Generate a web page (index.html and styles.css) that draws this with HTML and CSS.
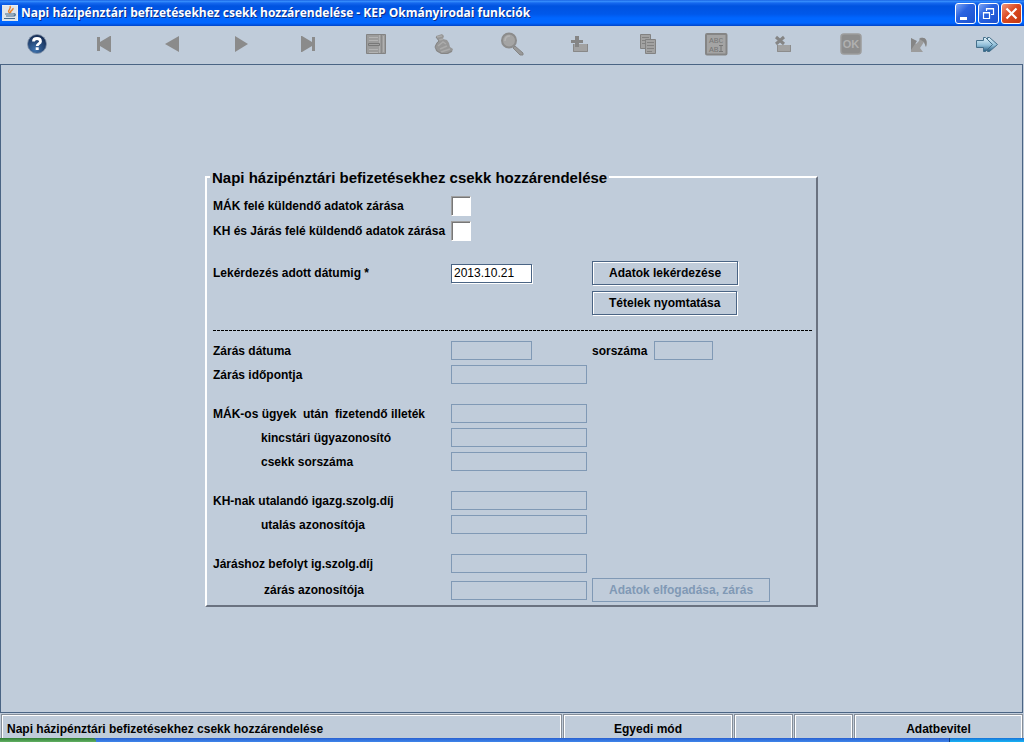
FILE: index.html
```
<!DOCTYPE html>
<html lang="hu">
<head>
<meta charset="utf-8">
<title>Napi házipénztári befizetésekhez csekk hozzárendelése - KEP Okmányirodai funkciók</title>
<link rel="stylesheet" href="styles.css">
</head>
<body>
<header class="titlebar">
  <svg class="app-icon" viewBox="0 0 16 16" aria-hidden="true"><rect width="16" height="16" fill="#dfe5ea"/><path d="M0 0h16v16" fill="none" stroke="#f8f8f4"/><path d="M8 8C4 6 10 4 8 1M9 8c-2-2 3-3 2-5" fill="none" stroke="#e8822c" stroke-width="1.4"/><path d="M3 9h8M4 11h7M2 13.500h11M11 9c3-1 3 2 0 2" fill="none" stroke="#456c8c" stroke-width="1.2"/></svg>
  <h1 class="title">Napi házipénztári befizetésekhez csekk hozzárendelése - KEP Okmányirodai funkciók</h1>
  <button class="win-btn" aria-label="Kis méret"><svg viewBox="0 0 19 19"><path d="M4 13h7v3H4z" fill="#fff"/></svg></button>
  <button class="win-btn" aria-label="Előző méret"><svg viewBox="0 0 19 19"><path d="M7.500 7V4.500h7v6H12M7 5h8M4.500 8.500h6v6h-6zM4 9h7" fill="none" stroke="#fff" stroke-width="1.2"/></svg></button>
  <button class="win-btn close" aria-label="Bezárás"><svg viewBox="0 0 19 19"><path d="M4.500 4.500l10 10M14.500 4.500l-10 10" stroke="#fff" stroke-width="2.200"/></svg></button>
</header>
<nav class="toolbar" aria-label="Eszköztár">
  <button class="tool" aria-label="Súgó"><svg viewBox="0 0 24 24"><defs><radialGradient id="hg" cx=".4" cy=".8" r=".8"><stop offset="0" stop-color="#3f73ae"/><stop offset="1" stop-color="#12284f"/></radialGradient></defs><circle cx="12" cy="12" r="9.500" fill="url(#hg)" stroke="#8796ab" stroke-width=".8"/><path d="M8.500 9.500C8.500 5.500 15.500 5.500 15.500 9.500 15.500 11.800 12.200 11.500 12.200 14" fill="none" stroke="#fff" stroke-width="2.800"/><path d="M10.700 15.300h3v2.700h-3z" fill="#fff"/></svg></button>
  <button class="tool" disabled aria-label="Első"><svg viewBox="0 0 24 24"><path d="M4 5h3v5l10-6h1v16h-1L7 14v5H4z" fill="#8b8b8b"/></svg></button>
  <button class="tool" disabled aria-label="Előző"><svg viewBox="0 0 24 24"><path d="M18 4v16L4 12z" fill="#8b8b8b"/></svg></button>
  <button class="tool" disabled aria-label="Következő"><svg viewBox="0 0 24 24"><path d="M6 4v16l13-8z" fill="#8b8b8b"/></svg></button>
  <button class="tool" disabled aria-label="Utolsó"><svg viewBox="0 0 24 24"><path d="M5 4h1l10 6V5h3v14h-3v-5L6 20H5z" fill="#8b8b8b"/></svg></button>
  <button class="tool" disabled aria-label="Adatlap"><svg viewBox="0 0 24 24"><path d="M2.500 2.500h19v19h-19z" fill="#9c9c9c" stroke="#838383"/><path d="M5 5.500h9M5 8.500h9M5 17.500h9M5 20.500h9" stroke="#b4b4b4"/><path d="M15.500 3v18M19.500 4v16" stroke="#b0b0b0"/><path d="M17.500 3v18" stroke="#8a8a8a"/><path d="M4.500 11.500h11v2h-11z" fill="#a2a2a2" stroke="#787878"/></svg></button>
  <button class="tool" disabled aria-label="Törlés"><svg viewBox="0 0 24 24"><path d="M4 4l6-2 2 2-1 3 4 1 2 3 1 4 3 2-1 3-4 2H9l-5-3-1-5 2-4 2-1-3-4z" fill="#979797"/><path d="M5 5l5-1M7 8l4-1M6 14l5-4 3 2M8 17l7-3M9 20l9-3" fill="none" stroke="#ababab" stroke-width="1.500"/><path d="M4 5l3 4-2 2-2 4 2 4 5 2.500h5l5-2.500" fill="none" stroke="#858585"/></svg></button>
  <button class="tool" disabled aria-label="Keresés"><svg viewBox="0 0 24 24"><path d="M15 14l8 7v2h-3l-7-7z" fill="#999" stroke="#858585"/><circle cx="9" cy="8.500" r="7" fill="#a4a4a4" stroke="#8c8c8c" stroke-width="2"/><path d="M5 9c0-3 2-5 5-5" fill="none" stroke="#b4b4b4" stroke-width="1.500"/></svg></button>
  <button class="tool" disabled aria-label="Hozzáadás"><svg viewBox="0 0 24 24"><path d="M5 12h15v8H5z" fill="#a2a2a2"/><path d="M5.500 12v7.500h14V12" fill="none" stroke="#888"/><path d="M7 4h4v4h4v3h-4v4H7v-4H3V8h4z" fill="#858585"/></svg></button>
  <button class="tool" disabled aria-label="Másolás"><svg viewBox="0 0 24 24"><g fill="#a2a2a2" stroke="#828282"><path d="M4.500 2.500h10v14h-10z"/><path d="M6 5.500h7M6 8.500h7M6 11.500h7"/><path d="M9.500 7.500h10v14h-10z"/><path d="M11 10.500h7M11 13.500h7M11 16.500h7M11 19.500h5"/></g></svg></button>
  <button class="tool" disabled aria-label="Szerkesztés"><svg viewBox="0 0 24 24"><rect x="2" y="2" width="20.500" height="20.500" rx="1" fill="#a4a4a4" stroke="#858585" stroke-width="2"/><text class="glyph" x="5" y="11" fill="#777">ABC</text><text class="glyph" x="5" y="20" fill="#777">AB</text><path d="M15 13.500h4M17 13v7M15 19.500h4" stroke="#777"/></svg></button>
  <button class="tool" disabled aria-label="Eltávolítás"><svg viewBox="0 0 24 24"><path d="M6 13h14v7H6z" fill="#a2a2a2"/><path d="M6.500 13v6.500h13V13" fill="none" stroke="#8c8c8c"/><path d="M5 5l8 7M13 5l-8 7" stroke="#858585" stroke-width="3"/></svg></button>
  <button class="tool" disabled aria-label="OK"><svg viewBox="0 0 24 24"><rect x="2" y="2" width="20" height="20" rx="3" fill="#8d8d8d" stroke="#9c9c9c" stroke-width="1.500"/><text class="glyph-ok" x="12" y="16" fill="#b0b0b0">OK</text></svg></button>
  <button class="tool" disabled aria-label="Visszavonás"><svg viewBox="0 0 24 24"><path d="M4 6v14h12l-3-4 4-6 2 5c2-5 1-10-6-9l-1 3-3 3z" fill="#9c9c9c"/><path d="M4 6v12l6-9zM12 7c5-3 9 0 7 8l-2-5-3-2z" fill="#858585"/></svg></button>
  <button class="tool" aria-label="Tovább"><svg viewBox="0 0 24 24"><defs><linearGradient id="ag" x2="0" y2="1"><stop offset="0" stop-color="#e2f3fb"/><stop offset=".55" stop-color="#91bfd9"/><stop offset="1" stop-color="#255b80"/></linearGradient></defs><g fill="url(#ag)" stroke="#446f8a"><path d="M12.500 8.500v-3h2l8 7-8 7h-2v-3"/><path d="M1.500 8.500h7v-3h2l7 7-7 7h-2v-4h-7z"/></g></svg></button>
</nav>
<main class="workspace">
  <form>
    <fieldset class="panel">
      <legend>Napi házipénztári befizetésekhez csekk hozzárendelése</legend>
      <div class="row tall"><label for="mak">MÁK felé küldendő adatok zárása</label><input class="check" type="checkbox" id="mak"></div>
      <div class="row tall"><label for="kh">KH és Járás felé küldendő adatok zárása</label><input class="check" type="checkbox" id="kh"></div>
      <div class="row tall query"><label for="date">Lekérdezés adott dátumig *</label><input class="field short" type="text" id="date" value="2013.10.21"><button class="btn" type="button">Adatok lekérdezése</button></div>
      <div class="row tall print"><button class="btn third" type="button">Tételek nyomtatása</button></div>
      <hr class="divider">
      <div class="row"><label for="zd">Zárás dátuma</label><input class="field short" type="text" id="zd" disabled><div class="serial"><label for="ss">sorszáma</label><input class="field tiny" type="text" id="ss" disabled></div></div>
      <div class="row"><label for="zi">Zárás időpontja</label><input class="field" type="text" id="zi" disabled></div>
      <div class="row group"><label for="mi">MÁK-os ügyek&nbsp; után&nbsp; fizetendő illeték</label><input class="field" type="text" id="mi" disabled></div>
      <div class="row"><label class="sub" for="ku">kincstári ügyazonosító</label><input class="field" type="text" id="ku" disabled></div>
      <div class="row"><label class="sub" for="cs">csekk sorszáma</label><input class="field" type="text" id="cs" disabled></div>
      <div class="row group"><label for="ki">KH-nak utalandó igazg.szolg.díj</label><input class="field" type="text" id="ki" disabled></div>
      <div class="row"><label class="sub" for="ua">utalás azonosítója</label><input class="field" type="text" id="ua" disabled></div>
      <div class="row group"><label for="ji">Járáshoz befolyt ig.szolg.díj</label><input class="field" type="text" id="ji" disabled></div>
      <div class="row tall accept"><label class="sub last" for="za">zárás azonosítója</label><input class="field" type="text" id="za" disabled><button class="btn" type="button" disabled>Adatok elfogadása, zárás</button></div>
    </fieldset>
  </form>
</main>
<footer class="status">
  <div class="cell message">Napi házipénztári befizetésekhez csekk hozzárendelése</div>
  <div class="cell">Egyedi mód</div>
  <div class="cell"></div>
  <div class="cell"></div>
  <div class="cell">Adatbevitel</div>
</footer>
<div class="taskbar"><div class="start"></div><div class="tray"></div></div>
</body>
</html>
```
FILE: styles.css
```
* { box-sizing: border-box; }
body {
  margin: 0;
  min-height: 100vh;
  display: flex;
  flex-direction: column;
  background: #c0ccda;
  color: #000;
  font: bold 12px/16px "Liberation Sans", Arial, sans-serif;
}
button, input { font: inherit; margin: 0; padding: 0; }
svg { display: block; width: 100%; height: 100%; }

.titlebar {
  height: 26px;
  padding: 0 2px;
  display: flex;
  align-items: center;
  gap: 2px;
  background: linear-gradient(#0a4fd8 0, #3d95ff 1px, #1668ee 3px, #0053e0 6px, #0058ea 14px, #0066ff 18px, #0066ff 23px, #0044c8 26px);
}
.app-icon { width: 16px; height: 16px; flex: none; }
.title {
  flex: 1;
  margin: 0 0 0 1px;
  font: bold 12px/18px "Open Sans", Tahoma, sans-serif;
  color: #fff;
  text-shadow: 1px 1px 0 #0a2e88;
  white-space: nowrap;
  overflow: hidden;
}
.win-btn {
  width: 21px;
  height: 21px;
  flex: none;
  border: 1px solid #fff;
  border-radius: 3px;
  background: linear-gradient(135deg, #7da5f5, #2a63e0 40%, #1c51cf);
}
.win-btn.close { background: linear-gradient(135deg, #f0987c, #dc4a22 45%, #c23810); }

.toolbar {
  height: 38px;
  padding: 0 3px 2px;
  display: grid;
  grid-template-columns: repeat(15, 1fr);
  place-items: center;
}
.tool { width: 24px; height: 24px; border: 0; background: none; }
.glyph { font: 8px "Liberation Mono", monospace; }
.glyph-ok { font: bold 11px "Liberation Sans", sans-serif; text-anchor: middle; }

.workspace {
  flex: 1;
  display: grid;
  place-items: center;
  margin-right: 1px;
  padding-bottom: 2px;
  border: 1px solid #4a6484;
}

.panel {
  width: 613px;
  max-width: 100%;
  margin: 0;
  padding: 8px 3px 2px 6px;
  border: 2px solid;
  border-color: #fff #6a7280 #6a7280 #fff;
}
legend { padding: 0 2px; margin-left: -3px; font-size: 15px; line-height: 17px; }
.row {
  display: grid;
  grid-template-columns: 233px 136px 1fr;
  column-gap: 5px;
  align-items: center;
  height: 24px;
}
.row label { white-space: nowrap; }
.tall { height: 25px; }
.query { margin-top: 17px; }
.print { margin-top: 5px; }
.group { margin-top: 15px; }
.accept { margin-top: 2px; }
.sub { padding-left: 48px; }
.last { padding-left: 51px; }

.check {
  appearance: none;
  width: 20px;
  height: 20px;
  background: #fff;
  border: 1px solid #fff;
  border-top-color: #a0a0a0;
  border-left-color: #a0a0a0;
  box-shadow: inset 1px 1px #777;
}
.field {
  width: 100%;
  height: 19px;
  padding: 0 2px;
  border: 1px solid #4a6484;
  border-radius: 0;
  background: #fff;
  box-shadow: 1px 1px #fff;
  font-weight: normal;
  font-size: 12px;
}
.field:disabled { border-color: #8099b5; background: none; box-shadow: none; }
.short { width: 81px; }
.tiny { width: 59px; }
.serial { display: flex; align-items: center; gap: 7px; }
.btn {
  justify-self: start;
  height: 24px;
  padding: 0 16px;
  border: 1px solid #4a6484;
  background: none;
  box-shadow: inset 1px 1px #fff, 1px 1px #fff;
  color: #000;
}
.btn:disabled { border-color: #8099b5; box-shadow: none; color: #8099b5; }
.third { grid-column: 3; }
.divider {
  height: 1px;
  margin: 14px 0 8px;
  border: 0;
  background: repeating-linear-gradient(90deg, #000 0 3px, transparent 3px 4px);
}

.status {
  padding: 1px 1px 0;
  display: grid;
  grid-template-columns: 1fr 170px 59px 59px 169px;
  gap: 1px;
  text-align: center;
}
.cell {
  height: 24px;
  padding-top: 6px;
  border: 1px solid #868e98;
  border-bottom: 0;
  box-shadow: inset 1px 1px #fff, inset -1px 0 #fff;
}
.message { padding-left: 5px; text-align: left; }
.taskbar {
  height: 4px;
  display: flex;
  justify-content: space-between;
  background: linear-gradient(#2860d0, #3f86ea);
}
.start { width: 96px; background: linear-gradient(#2f7d35, #62b163); border-top-right-radius: 3px; }
.tray { width: 75px; background: linear-gradient(#1672d8, #18b4f4); border-left: 1px solid #103c80; }
```
